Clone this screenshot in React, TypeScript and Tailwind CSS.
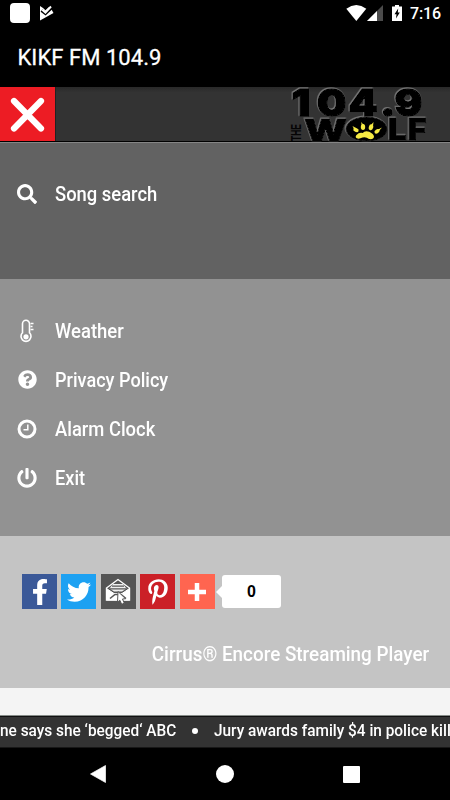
import React from "react";
import {
  FaFacebookF,
  FaPinterestP,
  FaPowerOff,
  FaQuestionCircle,
  FaSearch,
  FaTwitter,
} from "react-icons/fa";

function StatusBar() {
  return (
    <div className="flex h-[27px] items-start justify-between pt-[3px] pr-[9px] pl-[10px]">
      <div className="flex gap-[10px]">
        <div className="size-[20px] rounded-[4px] bg-white" />
        <svg width="14" height="16" viewBox="0 0 14 16" className="mt-[2px]">
          <path d="M0 1L3 3L5.5 5.2L9 2L11.5 4.5L13.5 8L0 15.5Z" fill="#fff" />
          <path d="M1.5 5.5L5.5 8.5L11.5 3" fill="none" stroke="#000" strokeWidth="3" />
          <path d="M2.2 4.8L5.4 7.5L11 1.5" fill="none" stroke="#fff" strokeWidth="2" />
        </svg>
      </div>
      <div className="flex items-start pt-[2px]">
        <svg width="21" height="17" viewBox="0 0 21 17">
          <path d="M.3 3.8Q10.3-3.6 20.3 3.8L10.3 16Z" fill="#fff" />
        </svg>
        <svg width="16" height="17" viewBox="0 0 16 17">
          <path d="M0 16L16 0V16Z" fill="#4b4b4b" />
          <path d="M0 16L10 6V16Z" fill="#fff" />
        </svg>
        <svg width="11" height="17" viewBox="0 0 11 17" className="ml-[9px]">
          <path d="M0 1.5H3V0H7V1.5H10V16H0Z" fill="#fff" />
          <path d="M6.2 3.5L2.5 9.2H4.5L4 13.5L7.8 7.6H5.8Z" fill="#000" />
        </svg>
        <span className="ml-[7px] text-[16px] leading-[18px] font-medium tracking-[-0.1px]">7:16</span>
      </div>
    </div>
  );
}

function WolfLogo() {
  return (
    <svg width="142" height="54" viewBox="0 0 142 54" className="block overflow-visible">
      <defs>
        <filter id="edge" x="-5%" y="-10%" width="110%" height="120%">
          <feDropShadow dx="-.7" dy="-.8" stdDeviation=".4" floodColor="#858585" />
        </filter>
      </defs>
      <g filter="url(#edge)" fontFamily="Inter, 'Liberation Sans', sans-serif" fontWeight="900" stroke="#000">
        <text transform="scale(1.12 1)" x="3.2 25.8 54 82.2 95" y="28.5" fontSize="37" strokeWidth="1.4">104.9</text>
        <text x="16" y="53.5" fontSize="30" textLength="43" lengthAdjust="spacingAndGlyphs" strokeWidth=".8">W</text>
        <text transform="scale(1.1 1)" x="91 108.6" y="53.5" fontSize="30" strokeWidth=".8">LF</text>
        <ellipse cx="78.5" cy="42" rx="20.5" ry="12" />
      </g>
      <text transform="translate(13 54) rotate(-90)" fontFamily="'Liberation Sans', sans-serif" fontWeight="700" fontSize="14" textLength="17" lengthAdjust="spacingAndGlyphs" fill="#050505">THE</text>
      <g fill="#f6ea43">
        <path d="M68.5 48C66 51 70 53 74.5 50.5Q78 49.5 81 52C87 53 87 48.5 84 46.5C80 43 76 44 75 46Q71 45 68.5 48Z" />
        <ellipse cx="68" cy="43" rx="2.8" ry="2" transform="rotate(25 68 43)" />
        <ellipse cx="75" cy="40" rx="2.2" ry="2.9" />
        <ellipse cx="83" cy="40.3" rx="2.2" ry="3" transform="rotate(15 83 40.3)" />
        <ellipse cx="89" cy="44.4" rx="2.8" ry="1.9" transform="rotate(-35 89 44.4)" />
        <path d="M64.5 39L68 41L66 42ZM73 35L76 38L74 39ZM85.5 35L85 39L83 38ZM94 40.5L91 44L89 43Z" />
      </g>
    </svg>
  );
}

function Thermometer() {
  return (
    <svg width="20" height="24" viewBox="0 0 20 24" fill="none" stroke="#fff">
      <path d="M5.5 13.8V4.8a3.5 3.5 0 0 1 7 0V13.8a5 5 0 1 1-7 0Z" strokeWidth="1.6" />
      <circle cx="9" cy="17.8" r="2.6" fill="#fff" stroke="none" />
      <path d="M13.5 4.5H16.5M13.5 7.5H15.5M13.5 10.5H16.5" strokeWidth="1.3" />
    </svg>
  );
}

function Clock() {
  return (
    <svg width="20" height="20" viewBox="0 0 20 20" fill="none" stroke="#fff">
      <circle cx="10" cy="10" r="8" strokeWidth="3" />
      <path d="M10.8 5.5V10.8H6.5" strokeWidth="1.5" />
    </svg>
  );
}

function MenuRow({ icon, scale, label }: { icon: React.ReactNode; scale: string; label: string }) {
  return (
    <div className="flex h-[49.2px] items-center">
      <div className="ml-[17px] flex w-[20px] justify-center">{icon}</div>
      <span className={"ml-[18px] origin-left text-[20px] font-medium whitespace-nowrap " + scale}>{label}</span>
    </div>
  );
}

function Mail() {
  return (
    <svg width="28" height="28" viewBox="0 0 28 28" fill="none" stroke="#fff" strokeWidth="1.4">
      <path d="M2.5 10L14 1.5L25.5 10V22H2.5Z" />
      <path d="M5.5 10.5L9 6H19L22.5 10.5L18 13.5H10Z" fill="#eee" stroke="none" />
      <path d="M8 8.2H20M6 10.8H22" stroke="#555" strokeWidth="1.3" />
      <path d="M2.5 10.5L10 15.5H18L25.5 10.5V22H2.5Z" fill="#fff" strokeWidth="1" />
      <path d="M6 20.5L11 16.5H17L22 20.5" stroke="#555" strokeWidth="1.6" />
      <path d="M14 13.5L21.5 20.7L18.5 21L20.3 25.2L17.7 26.3L15.8 22.2L13.5 24.3Z" fill="#fff" stroke="#555" strokeWidth="1" />
    </svg>
  );
}

export default function App() {
  return (
    <div className="flex h-[800px] w-[450px] flex-col overflow-hidden bg-black font-[Roboto,'Liberation_Sans',sans-serif] text-white">
      <StatusBar />
      <div className="flex h-[60px] items-center pl-[17.5px] text-[22px] leading-[60px]">
        <span className="pt-[2px] tracking-[0.05px] [-webkit-text-stroke:0.3px_white]">KIKF FM 104.9</span>
      </div>
      <header className="flex h-[55px] border-b border-black bg-[#333] bg-linear-to-b from-[#292929] to-[#333] to-10%">
        <div className="flex w-[56px] items-center justify-center border-r border-[#222] bg-[#ed1c24]">
          <svg width="36" height="36" viewBox="0 0 36 36">
            <path d="M4 5L31 32.5M31 5L4 32.5" stroke="#fff" strokeWidth="6.2" strokeLinecap="round" />
          </svg>
        </div>
        <div className="ml-auto pr-[20px]"><WolfLogo /></div>
      </header>
      <section className="h-[137px] border-t border-[#858585] bg-[#626262] pt-[26px]">
        <MenuRow icon={<FaSearch size={20} />} scale="scale-x-[0.92]" label="Song search" />
      </section>
      <section className="h-[257px] bg-[#929292] pt-[27px]">
        <MenuRow icon={<Thermometer />} scale="scale-x-[0.925]" label="Weather" />
        <MenuRow icon={<FaQuestionCircle size={19} />} scale="scale-x-[0.905]" label="Privacy Policy" />
        <MenuRow icon={<Clock />} scale="scale-x-[0.92]" label="Alarm Clock" />
        <MenuRow icon={<FaPowerOff size={20} />} scale="scale-x-[0.91]" label="Exit" />
      </section>
      <section className="h-[152px] bg-[#c4c4c4] pt-[38px]">
        <div className="flex gap-[4.4px] pl-[22px]">
          <div className="flex size-[35px] items-end justify-center bg-[#3b5998] pb-[4px]"><FaFacebookF size={26} /></div>
          <div className="flex size-[35px] items-center justify-center bg-[#1da1f2]"><FaTwitter size={24} /></div>
          <div className="flex size-[35px] items-center justify-center bg-[#555]"><Mail /></div>
          <div className="flex size-[35px] items-center justify-center bg-[#cb2027]"><FaPinterestP size={26} /></div>
          <div className="flex size-[35px] items-center justify-center bg-[#ff6550]">
            <svg width="18" height="18" viewBox="0 0 18 18"><path d="M9 0V18M0 9H18" stroke="#fff" strokeWidth="4.5" /></svg>
          </div>
          <div className="flex items-center">
            <svg width="6" height="12" viewBox="0 0 6 12" className="-ml-[3px]"><path d="M6 0L0 6L6 12Z" fill="#fff" /></svg>
            <div className="h-[33px] w-[59px] rounded-[3px] bg-white text-center font-['Liberation_Sans',Arial,sans-serif] text-[16px] leading-[33px] font-bold text-black">0</div>
          </div>
        </div>
        <p className="mt-[30px] origin-right scale-x-[0.943] pr-[22px] text-right text-[20px] leading-[30px] font-medium whitespace-nowrap">Cirrus® Encore Streaming Player</p>
      </section>
      <div className="h-[27px] bg-[#f4f4f4]" />
      <div className="flex h-[33px] items-center overflow-hidden border-t border-b border-t-[#858b87] border-b-[#181818] bg-[#333] text-[17px] font-medium whitespace-nowrap shadow-[inset_0_1px_0_#111]">
        <span className="w-[192px] shrink-0 origin-left scale-x-[0.905] pb-px">ne says she ‘begged‘ ABC</span>
        <span className="mb-[2px] size-[6px] shrink-0 rounded-full bg-white" />
        <span className="ml-[16px] w-[260px] shrink-0 origin-left scale-x-[0.905] pb-px">Jury awards family $4 in police kill</span>
      </div>
      <nav className="flex h-[52px] items-center">
        <svg width="16" height="18" viewBox="0 0 16 18" className="ml-[90px]"><path d="M15.5 .5V17.5L.5 9Z" fill="#fff" stroke="#fff" strokeWidth=".7" strokeLinejoin="round" /></svg>
        <div className="ml-[110px] size-[18px] rounded-full bg-white" />
        <div className="ml-[109px] size-[17px] rounded-[1px] bg-white" />
      </nav>
    </div>
  );
}
